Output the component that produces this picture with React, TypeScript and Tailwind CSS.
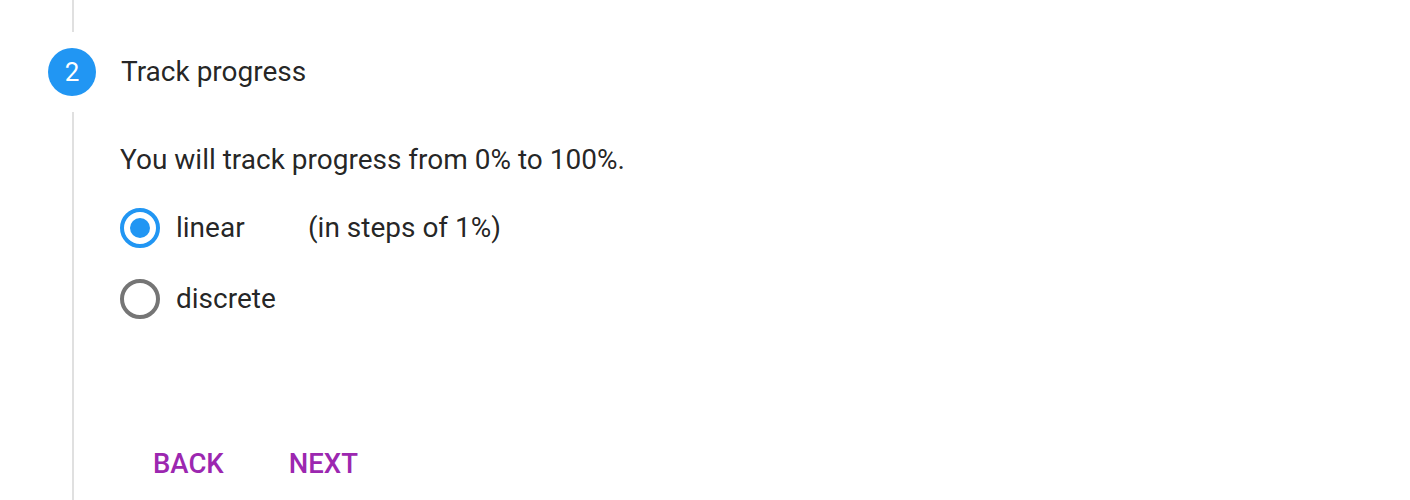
import React, { useState } from 'react';

const Radio = ({ checked }: { checked: boolean }) => (
    <svg width="48" height="48" viewBox="0 0 48 48" className="shrink-0">
        <circle cx="24" cy="24" r="18" fill="none" stroke={checked ? '#2196f3' : '#757575'} strokeWidth="4" />
        {checked && <circle cx="24" cy="24" r="10" fill="#2196f3" />}
    </svg>
);

export default function App() {
    const [mode, setMode] = useState('linear');

    return (
        <div className="w-[1410px] h-[500px] overflow-hidden bg-white text-[rgba(0,0,0,0.87)] font-['Roboto',sans-serif]">
            <div className="ml-[72px] w-[2px] h-[32px] bg-[#e0e0e0]" />
            <div className="flex items-center h-[48px] mt-[16px] ml-[48px]">
                <div className="w-[48px] h-[48px] rounded-full bg-[#2196f3] text-white flex items-center justify-center text-[26px]">
                    2
                </div>
                <span className="ml-[25px] text-[28px]">Track progress</span>
            </div>
            <div className="ml-[72px] mt-[16px] border-l-2 border-[#e0e0e0] h-[400px] pl-[46px] pt-[28px]">
                <p className="text-[28px] leading-[40px]">You will track progress from 0% to 100%.</p>
                <div className="mt-[24px] flex flex-col gap-[23px] -ml-[4px]">
                    <label className="flex items-center cursor-pointer" onClick={() => setMode('linear')}>
                        <Radio checked={mode === 'linear'} />
                        <span className="ml-[12px] text-[28px] w-[132px]">linear</span>
                        <span className="text-[28px]">(in steps of 1%)</span>
                    </label>
                    <label className="flex items-center cursor-pointer" onClick={() => setMode('discrete')}>
                        <Radio checked={mode === 'discrete'} />
                        <span className="ml-[12px] text-[28px]">discrete</span>
                    </label>
                </div>
                <div className="mt-[121px] flex gap-[65px] ml-[33px]">
                    <button className="text-[#9c27b0] font-medium text-[27.5px] leading-[40px] uppercase">Back</button>
                    <button className="text-[#9c27b0] font-medium text-[27.5px] leading-[40px] uppercase">Next</button>
                </div>
            </div>
        </div>
    );
}
